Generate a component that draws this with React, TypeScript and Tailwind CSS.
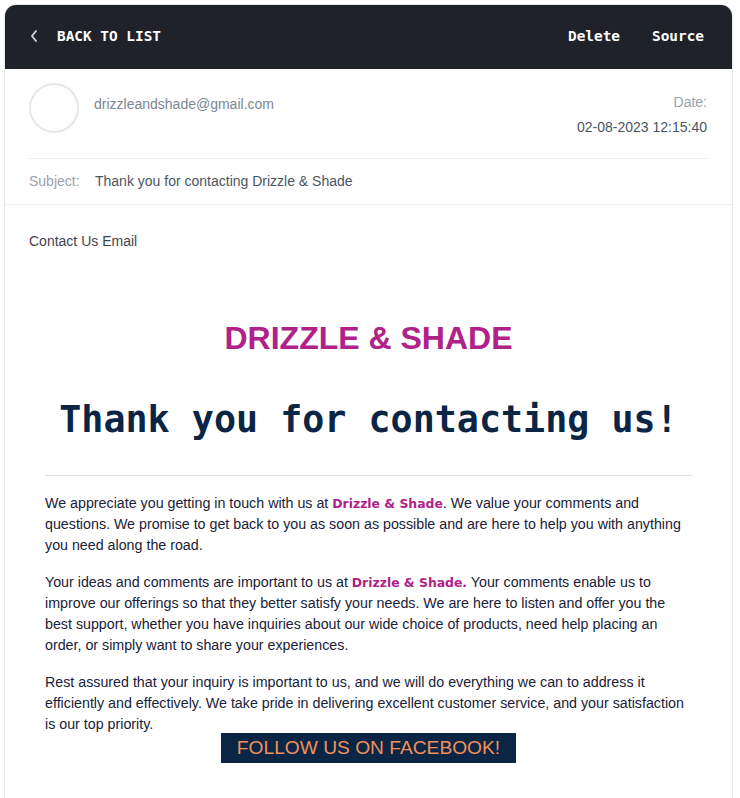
import React from "react";

const Brand = ({ children }: { children: React.ReactNode }) => (
  <span className="font-bold text-[#b0218a] [font-family:'DejaVu_Sans',sans-serif] text-[12.4px]">{children}</span>
);

export default function App() {
  return (
    <div className="min-h-[798px] bg-white p-1 pr-[7px] [font-family:'Liberation_Sans',Arial,sans-serif]">
      <div className="w-[729px] rounded-t-xl border border-[#e5e7eb] bg-white overflow-hidden min-h-[800px]">
        {/* Toolbar */}
        <div className="h-[65px] -mx-px -mt-px bg-[#1f2229] flex items-center px-[25px] text-white [font-family:'DejaVu_Sans_Mono',monospace] font-bold text-[14.4px]">
          <button className="flex items-center gap-[18px]">
            <svg width="10" height="14" viewBox="0 0 10 14" className="text-[#c9ccd2]">
              <polyline points="7,2 3,7 7,12" fill="none" stroke="currentColor" strokeWidth="2" strokeLinecap="round" strokeLinejoin="round" />
            </svg>
            <span>BACK TO LIST</span>
          </button>
          <div className="ml-auto flex items-center gap-[32px] pr-[4px]">
            <button>Delete</button>
            <button>Source</button>
          </div>
        </div>

        {/* Message meta */}
        <div className="px-[24px] border-b border-[#eceef1] text-[14px]">
          <div className="h-[90px] pt-[14px] flex border-b border-[#eceef1]">
            <div className="w-[50px] h-[50px] rounded-full border-2 border-[#e5e7eb] shrink-0" />
            <div className="ml-[15px] pt-[11px] text-[#7d8694]">drizzleandshade@gmail.com</div>
            <div className="ml-auto text-right pt-[9px] pr-[1px]">
              <div className="text-[#9aa1ab]">Date:</div>
              <div className="text-[#4b5563] mt-[4px]">02-08-2023 12:15:40</div>
            </div>
          </div>
          <div className="h-[45px] flex items-center">
            <span className="text-[#9aa1ab] w-[66px]">Subject:</span>
            <span className="text-[#4b5563]">Thank you for contacting Drizzle &amp; Shade</span>
          </div>
        </div>

        {/* Body */}
        <div className="px-[24px] pt-[26px]">
          <div className="text-[14px] leading-[20px] text-[#3f4550]">Contact Us Email</div>

          <div className="px-4">
            <h1 className="mt-[69px] text-center text-[32px] leading-[36px] font-bold text-[#b0218a]">DRIZZLE &amp; SHADE</h1>
            <h2 className="mt-[42px] text-center text-[36.7px] leading-[44px] font-bold text-[#0b2545] [font-family:'DejaVu_Sans_Mono',monospace]">
              Thank you for contacting us!
            </h2>
            <hr className="mt-[33px] border-t border-[#dedfe3]" />

            <div className="mt-[17px] text-[14.25px] leading-[21px] text-[#1a2238]">
              <p className="mb-4">
                We appreciate you getting in touch with us at <Brand>Drizzle &amp; Shade</Brand>. We value your comments and questions. We promise to get back to you as soon as possible and are here to help you with anything you need along the road.
              </p>
              <p className="mb-4">
                Your ideas and comments are important to us at <Brand>Drizzle &amp; Shade.</Brand> Your comments enable us to improve our offerings so that they better satisfy your needs. We are here to listen and offer you the best support, whether you have inquiries about our wide choice of products, need help placing an order, or simply want to share your experiences.
              </p>
              <p>
                Rest assured that your inquiry is important to us, and we will do everything we can to address it efficiently and effectively. We take pride in delivering excellent customer service, and your satisfaction is our top priority.
              </p>
            </div>

            <div className="flex justify-center -mt-[2px]">
              <a className="bg-[#0b2545] text-[#f0905a] text-[19.2px] leading-[30px] h-[30px] px-[16px]">FOLLOW US ON FACEBOOK!</a>
            </div>
          </div>
        </div>
      </div>
    </div>
  );
}
